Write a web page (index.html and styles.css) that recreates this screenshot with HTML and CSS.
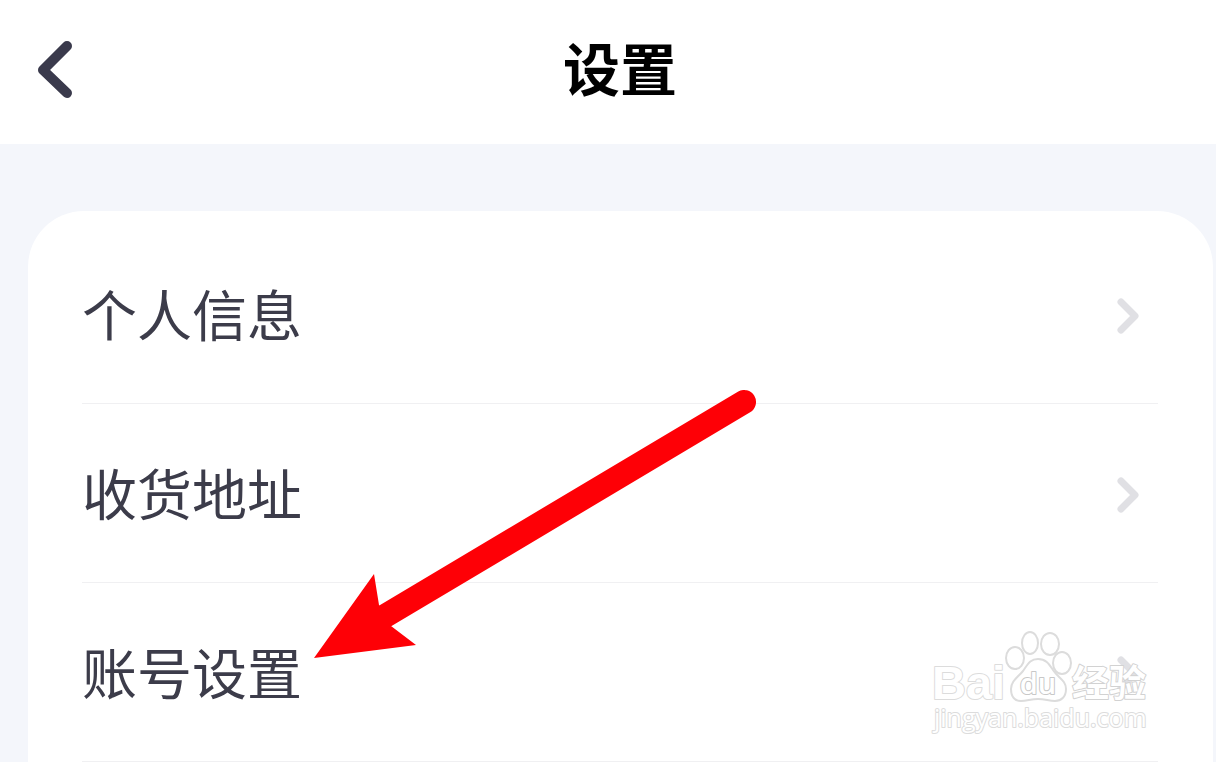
FILE: index.html
```html
<!DOCTYPE html>
<html lang="zh-CN">

<head>
    <meta charset="UTF-8">
    <meta name="viewport" content="width=device-width, initial-scale=1.0">
    <title>设置</title>
    <link rel="stylesheet" href="styles.css">
</head>

<body>
    <div class="page">
        <header class="header">
            <button class="back" type="button" aria-label="返回">
                <svg width="36" height="60" viewBox="0 0 36 60" aria-hidden="true">
                    <path d="M31 6 7 30l24 23" />
                </svg>
            </button>
            <h1 class="title">设置</h1>
        </header>
        <main class="main">
            <nav class="card">
                <a class="row" href="#profile">
                    <span class="label">个人信息</span>
                    <svg class="chevron" width="24" height="36" viewBox="0 0 24 36" aria-hidden="true">
                        <path d="m5 4 14 14L5 32" />
                    </svg>
                </a>
                <a class="row" href="#address">
                    <span class="label">收货地址</span>
                    <svg class="chevron" width="24" height="36" viewBox="0 0 24 36" aria-hidden="true">
                        <path d="m5 4 14 14L5 32" />
                    </svg>
                </a>
                <a class="row" href="#account">
                    <span class="label">账号设置</span>
                    <svg class="chevron" width="24" height="36" viewBox="0 0 24 36" aria-hidden="true">
                        <path d="m5 4 14 14L5 32" />
                    </svg>
                </a>
            </nav>
        </main>
        <!-- 红色指示箭头 -->
        <svg class="pointer" width="444" height="270" viewBox="0 0 444 270" aria-hidden="true">
            <path class="pointer-line" d="M430 12 71 226" />
            <path d="M0 268 60 184 65 215 77 236 102 255Z" />
        </svg>
        <!-- 水印 -->
        <svg class="watermark" width="222" height="110" viewBox="0 0 222 110">
            <text class="wm-bold" x="2" y="71" font-size="47">Bai</text>
            <ellipse cx="85" cy="30" rx="9" ry="11" />
            <ellipse cx="100" cy="15" rx="8" ry="11" />
            <ellipse cx="120" cy="16" rx="9" ry="11" />
            <ellipse cx="132" cy="35" rx="9" ry="11" />
            <path d="M108 31c8 0 11 5 15 11 5 8 13 10 13 19 0 8-5 12-11 12-6 0-10-2-17-2s-11 2-17 2c-6 0-10-4-10-12 0-8 7-12 12-18 5-7 7-12 15-12Z" />
            <text class="wm-du" x="108" y="66" font-size="29" text-anchor="middle">du</text>
            <text class="wm-cjk" x="142" y="69" font-size="37">经验</text>
            <text class="wm-url" x="4" y="99" font-size="25">jingyan.baidu.com</text>
        </svg>
    </div>
</body>

</html>
```
FILE: styles.css
```css
* {
    box-sizing: border-box;
}

body {
    margin: 0;
    font-family: "Noto Sans CJK SC", sans-serif;
    color: #3c3c4a;
    background: #f4f6fb;
}

.page {
    position: relative;
    display: flex;
    flex-direction: column;
    min-height: 100vh;
    overflow: hidden;
}

.header {
    display: grid;
    grid-template-columns: 36px 1fr 36px;
    align-items: center;
    height: 144px;
    padding: 0 12px 4px 36px;
    background: #fff;
}

.back {
    padding: 0;
    border: none;
    background: none;
    cursor: pointer;
}

.back svg {
    display: block;
}

.back path {
    fill: none;
    stroke: #3a3a4c;
    stroke-width: 10;
    stroke-linecap: round;
    stroke-linejoin: round;
}

.title {
    margin: 0;
    padding-bottom: 8px;
    color: #000;
    font-size: 57px;
    font-weight: 700;
    line-height: 80px;
    text-align: center;
}

.main {
    display: flex;
    flex: 1;
    padding: 67px 3px 0 28px;
}

.card {
    flex: 1;
    padding: 14px 55px 0 54px;
    border-radius: 56px 56px 0 0;
    background: #fff;
}

.row {
    display: flex;
    align-items: center;
    justify-content: space-between;
    height: 179px;
    padding: 4px 18px 0 0;
    border-bottom: 1px solid #f0f0f2;
    color: inherit;
    text-decoration: none;
}

.label {
    padding-bottom: 8px;
    font-size: 55px;
    line-height: 80px;
}

.chevron {
    fill: none;
    stroke: #e0e0e4;
    stroke-width: 7;
    stroke-linecap: round;
    stroke-linejoin: round;
}

.pointer {
    position: absolute;
    left: 314px;
    top: 390px;
    fill: #fe0006;
    pointer-events: none;
}

.pointer-line {
    stroke: #fe0006;
    stroke-width: 24;
    stroke-linecap: round;
}

.watermark {
    position: absolute;
    right: 64px;
    bottom: 24px;
    fill: #fff;
    stroke: #dcdcdc;
    stroke-width: 2;
    stroke-linejoin: round;
    pointer-events: none;
}

.watermark text {
    paint-order: stroke;
}

.wm-bold {
    font-family: "Liberation Sans", sans-serif;
    font-weight: 700;
}

.wm-du {
    font-family: "Open Sans", sans-serif;
    font-weight: 600;
    stroke: #c8c8c8;
}

.wm-cjk {
    font-weight: 700;
    stroke: #d2d2d2;
}

.wm-url {
    font-family: "Open Sans", sans-serif;
    font-weight: 400;
}
```
